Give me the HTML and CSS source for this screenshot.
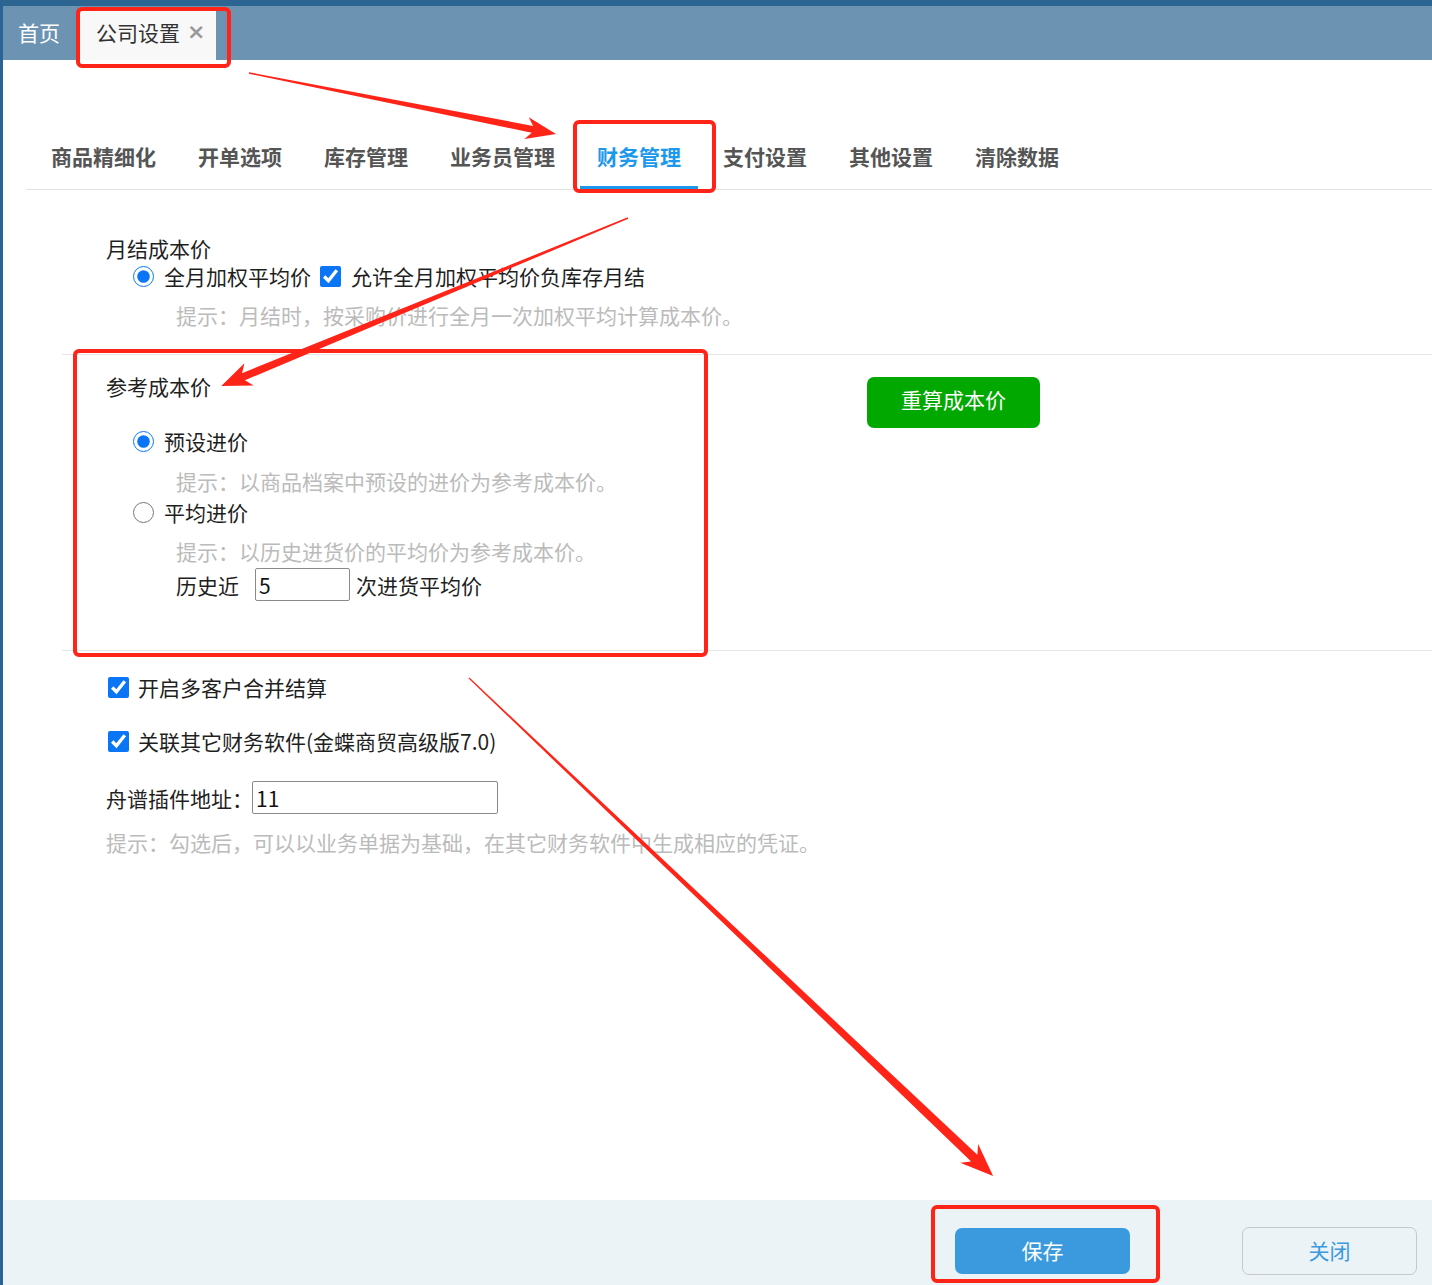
FILE: index.html
```html
<!DOCTYPE html>
<html lang="zh-CN">
<head>
<meta charset="utf-8">
<title>公司设置</title>
<link rel="stylesheet" href="styles.css">
</head>
<body>
<div class="app">
  <div class="topbar">
    <div class="tab">首页</div>
    <div class="tab active">公司设置<span class="close">×</span></div>
  </div>
  <div class="main">
    <div class="nav">
      <div class="nav-item">商品精细化</div>
      <div class="nav-item">开单选项</div>
      <div class="nav-item">库存管理</div>
      <div class="nav-item">业务员管理</div>
      <div class="nav-item active">财务管理</div>
      <div class="nav-item">支付设置</div>
      <div class="nav-item">其他设置</div>
      <div class="nav-item">清除数据</div>
    </div>

    <div class="section s1">
      <div class="label">月结成本价</div>
      <div class="row opt">
        <input type="radio" name="m" checked><span class="txt">全月加权平均价</span>
        <input type="checkbox" class="cb-inline" checked><span class="txt">允许全月加权平均价负库存月结</span>
      </div>
      <div class="hint h1">提示：月结时，按采购价进行全月一次加权平均计算成本价。</div>
    </div>

    <div class="section s2">
      <div class="col">
        <div class="label">参考成本价</div>
        <div class="row opt r-a">
          <input type="radio" name="r" checked><span class="txt">预设进价</span>
        </div>
        <div class="hint h2">提示：以商品档案中预设的进价为参考成本价。</div>
        <div class="row opt r-b">
          <input type="radio" name="r"><span class="txt">平均进价</span>
        </div>
        <div class="hint h3">提示：以历史进货价的平均价为参考成本价。</div>
        <div class="row hist">
          <span>历史近</span>
          <input type="text" class="inp inp-n" value="5">
          <span class="after">次进货平均价</span>
        </div>
      </div>
      <div class="side">
        <button class="btn-green">重算成本价</button>
      </div>
    </div>

    <div class="section s3">
      <div class="row chk">
        <input type="checkbox" checked><span class="txt">开启多客户合并结算</span>
      </div>
      <div class="row chk chk2">
        <input type="checkbox" checked><span class="txt">关联其它财务软件(金蝶商贸高级版7.0)</span>
      </div>
      <div class="row addr">
        <span class="addr-label">舟谱插件地址：</span>
        <input type="text" class="inp inp-addr" value="11">
      </div>
      <div class="hint h4">提示：勾选后，可以以业务单据为基础，在其它财务软件中生成相应的凭证。</div>
    </div>
  </div>
  <div class="footer">
    <button class="btn-save">保存</button>
    <button class="btn-close">关闭</button>
  </div>
</div>

<svg class="annot" width="1432" height="1285" viewBox="0 0 1432 1285" xmlns="http://www.w3.org/2000/svg">
  <g fill="none" stroke="#ff2318" stroke-width="4">
    <rect x="78" y="9" width="151" height="57" rx="4"/>
    <rect x="575" y="122" width="139" height="69" rx="4"/>
    <rect x="75" y="351" width="631" height="304" rx="4"/>
    <rect x="933" y="1207" width="225" height="74" rx="4"/>
  </g>
  <g fill="#ff2318">
    <polygon transform="translate(249,73) rotate(11.24)" points="0,-0.7 289,-3.5 283,-11 313,0 283,11 289,3.5 0,0.7"/>
    <polygon transform="translate(628,218) rotate(157.57)" points="0,-0.7 416,-3.8 410,-12 440,0 410,12 416,3.8 0,0.7"/>
    <polygon transform="translate(469,678) rotate(43.54)" points="0,-0.6 697,-4.5 690,-13 723,0 690,13 697,4.5 0,0.6"/>
  </g>
</svg>
</body>
</html>
```

FILE: styles.css
```css
* { box-sizing: border-box; }

body {
  margin: 0;
  position: relative;
  font-family: "Noto Sans CJK SC", "Noto Sans", sans-serif;
  font-size: 21px;
  color: #1f1f1f;
  background: #ffffff;
}

.app {
  height: 1285px;
  border-left: 3px solid #2a6494;
  display: flex;
  flex-direction: column;
  overflow: hidden;
}

/* top tab bar */
.topbar {
  height: 60px;
  border-top: 6px solid #2c6592;
  background: #6d93b3;
  display: flex;
  align-items: flex-end;
}

.tab {
  height: 50px;
  line-height: 44px;
  padding: 0 15px;
  color: #ffffff;
  font-size: 21px;
}

.tab.active {
  margin-left: 3px;
  padding: 0 11px 0 18px;
  background: #f8f8f8;
  color: #333333;
}

.close {
  margin-left: 7px;
  color: #9a9a9a;
  font-size: 22px;
  font-weight: bold;
  font-family: "DejaVu Sans", sans-serif;
  position: relative;
  top: -2px;
}

/* main */
.main {
  flex: 1;
  padding-left: 23px;
}

.nav {
  margin-top: 67px;
  display: flex;
  gap: 8px;
  padding-left: 8px;
  border-bottom: 1px solid #e3e3e3;
}

.nav-item {
  padding: 12px 17px 13px;
  line-height: 34px;
  font-weight: bold;
  color: #555555;
  border-bottom: 3px solid transparent;
}

.nav-item.active {
  color: #1c98ec;
  border-bottom-color: #1c98ec;
}

.section {
  margin-left: 36px;
  padding-left: 44px;
  line-height: 28px;
}

.s1 {
  padding-top: 44px;
  padding-bottom: 25px;
}

.s2 {
  border-top: 1px solid #e6e6e6;
  padding-top: 17px;
  padding-bottom: 49px;
  display: grid;
  grid-template-columns: 761px auto;
  align-items: start;
}

.s3 {
  border-top: 1px solid #e6e6e6;
  padding-top: 22px;
}

.label {
  height: 28px;
}

.row {
  display: flex;
  align-items: center;
  height: 28px;
  white-space: nowrap;
}

.row input[type="radio"],
.row input[type="checkbox"] {
  width: 21px;
  height: 21px;
  margin: 0;
  accent-color: #0b76f5;
}

.opt {
  margin-left: 28px;
}

.opt input[type="radio"] {
  margin-left: -1px;
}

.txt {
  margin-left: 10px;
}

.cb-inline {
  margin-left: 9px !important;
}

.cb-inline + .txt {
  margin-left: 10px;
}

.hint {
  color: #bbbbbb;
  margin-left: 70px;
  height: 28px;
  white-space: nowrap;
}

.h1 { margin-top: 11px; }
.r-a { margin-top: 27px; }
.h2 { margin-top: 12px; }
.r-b { margin-top: 3px; }
.h3 { margin-top: 11px; }

.hist {
  margin-top: 3px;
  margin-left: 70px;
  height: 33px;
}

.inp {
  height: 33px;
  border: 1px solid #8a8a8a;
  border-radius: 2px;
  font-family: "Noto Sans CJK SC", "Noto Sans", sans-serif;
  font-size: 21px;
  color: #111111;
  padding: 0 3px;
  margin: 0;
  outline: none;
  background: #ffffff;
}

.inp-n {
  width: 95px;
  margin-left: 16px;
}

.after {
  margin-left: 6px;
}

.side {
  padding-top: 5px;
}

.btn-green {
  width: 173px;
  height: 51px;
  border: none;
  border-radius: 7px;
  background: #00a800;
  color: #ffffff;
  font-family: "Noto Sans CJK SC", "Noto Sans", sans-serif;
  font-size: 21px;
  padding: 0 0 7px;
}

.chk input[type="checkbox"] {
  margin-left: 2px;
}

.chk .txt {
  margin-left: 9px;
}

.chk2 {
  margin-top: 26px;
}

.addr {
  margin-top: 26px;
  height: 33px;
}

.addr-label {
  width: 146px;
  overflow: hidden;
}

.inp-addr {
  width: 246px;
}

.h4 {
  margin-left: 0;
  margin-top: 14px;
}

/* footer */
.footer {
  height: 85px;
  background: #ebf3f7;
  display: flex;
  justify-content: flex-end;
  align-items: flex-start;
  gap: 112px;
  padding: 27px 15px 0 0;
}

.btn-save,
.btn-close {
  width: 175px;
  border-radius: 7px;
  font-family: "Noto Sans CJK SC", "Noto Sans", sans-serif;
  font-size: 21px;
  padding: 0 0 2px;
}

.btn-save {
  height: 46px;
  margin-top: 1px;
  border: none;
  background: #3a9add;
  color: #ffffff;
}

.btn-close {
  height: 48px;
  border: 1px solid #c8c8c8;
  background: transparent;
  color: #3a9add;
}

/* annotation overlay */
.annot {
  position: absolute;
  left: 0;
  top: 0;
  pointer-events: none;
}
```
